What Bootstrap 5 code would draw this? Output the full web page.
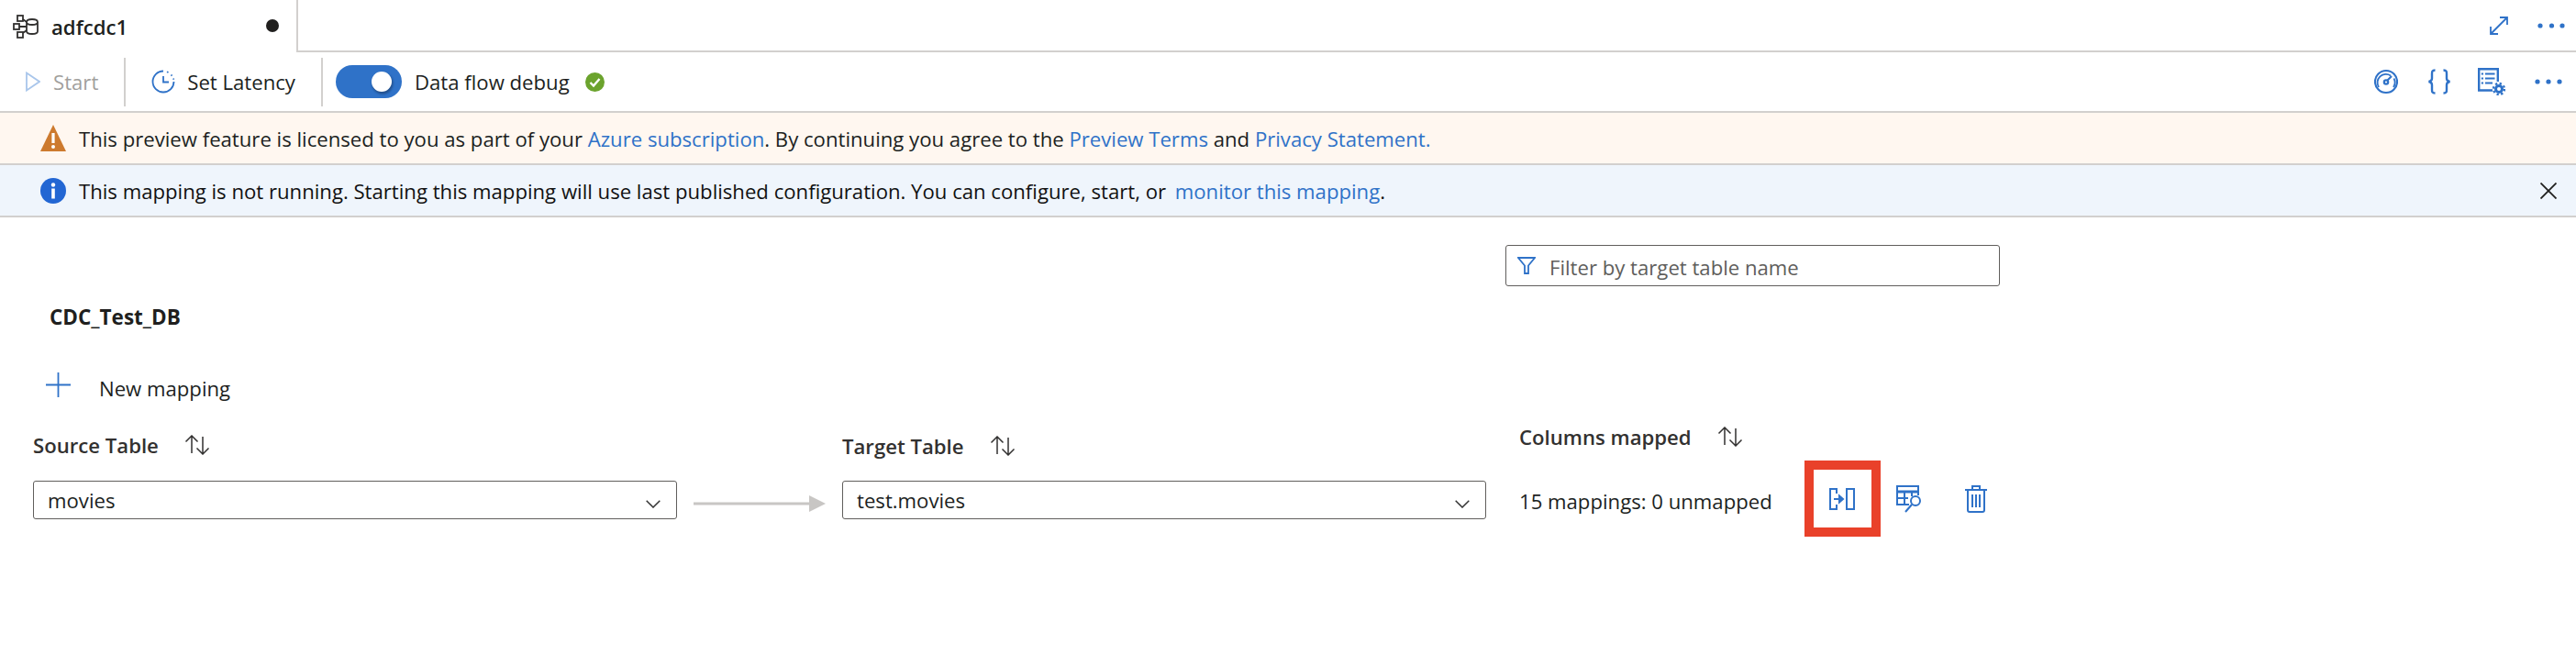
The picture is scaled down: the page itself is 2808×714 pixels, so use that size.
<!doctype html>
<html lang="en"><head><meta charset="utf-8"><title>adfcdc1</title>
<link rel="stylesheet" href="https://cdn.jsdelivr.net/npm/bootstrap@5.3.0/dist/css/bootstrap.min.css">
<style>
html,body{height:100%;}
body{background:#fff;color:#201f1e;font-family:"Open Sans","Noto Sans",sans-serif;font-size:22.15px;line-height:32px;overflow:hidden;}
a{color:#2f72c8;text-decoration:none;}
svg{flex:none;display:block;}
.ink{fill:none;stroke:#2f72c8;}
.ink-dark{fill:none;stroke:#323130;}
.tabbar{height:57px;}
.doc-tab{width:325px;border-right:2px solid #d2d0ce;padding-left:14px;height:57px;}
.doc-name{font-weight:600;margin-left:14px;}
.dirty-dot{width:14px;height:14px;border-radius:50%;background:#201f1e;margin-left:auto;margin-right:19px;margin-bottom:2px;}
.tab-rest{border-bottom:2px solid #d2d0ce;padding-right:12px;}
.expand-ic{margin-right:32px;}
.toolbar-strip{height:66px;border-bottom:2px solid #d2d0ce;padding-left:28px;padding-right:15px;}
.tool-sep{width:2px;height:53px;background:#d2d0ce;margin-left:28px;}
.tool-muted{color:#a19f9d;margin-left:14px;}
.clock-ic{margin-left:28px;}
.tool-text{margin-left:13px;}
.form-check.switch-wrap{margin-left:14px;}
.switch-text{margin-left:14px;}
.ok-ic{margin-left:17px;}
.braces-ic{margin-left:32px;}
.doc-ic{margin-left:29px;}
.more-ic{margin-left:32px;}
.form-switch .form-check-input.flow-switch:checked{width:72px;height:36px;background-color:#2f72c8;border:0;border-radius:18px;background-size:36px 36px;background-position:right 4px center;opacity:1;box-shadow:none;
background-image:url("data:image/svg+xml,%3Csvg xmlns='http://www.w3.org/2000/svg' width='36' height='36'%3E%3Cdefs%3E%3Cfilter id='b'%3E%3CfeGaussianBlur stdDeviation='1.2'/%3E%3C/filter%3E%3C/defs%3E%3Ccircle cx='19' cy='20' r='11.5' fill='%23143560' opacity='.55' filter='url(%23b)'/%3E%3Ccircle cx='18' cy='18' r='11' fill='%23fff'/%3E%3C/svg%3E");}
.notice{height:57px;border-bottom:2px solid #d2d0ce;padding-left:44px;}
.notice-warn{background:#fff7f0;}
.notice-info{background:#eff5fc;color:#111;}
.notice-text{margin-left:14px;}
.close-ic{margin-right:21px;}
.filter-box{width:539px;height:45px;margin-left:1641px;margin-top:30px;border:1px solid #605e5c;border-radius:3px;padding-left:12px;}
.filter-box .form-control{border:0;padding:0;margin-left:15px;margin-top:2px;font-size:22.15px;background:transparent;box-shadow:none;line-height:32px;}
.filter-box .form-control::placeholder{color:#605e5c;opacity:1;}
.db-title{margin-left:54px;margin-top:18px;font-weight:700;font-size:22.5px;}
.new-map{margin-left:50px;margin-top:42px;}
.plus-ic{margin-top:2px;}
.new-text{margin-left:31px;margin-top:3px;}
.map-cols{margin-left:36px;}
.col-label{font-weight:600;color:#323130;}
.sort-ic{margin-left:28px;}
.label-src{margin-top:30px;margin-bottom:23px;}
.label-tgt{margin-top:31px;margin-bottom:22px;}
.label-cols{margin-top:21px;}
.map-select.form-select{height:42px;border:1px solid #605e5c;border-radius:3px;padding:0 0 0 15px;font-size:22.15px;line-height:40px;color:#201f1e;box-shadow:none;
background-image:url("data:image/svg+xml,%3Csvg xmlns='http://www.w3.org/2000/svg' width='16' height='9'%3E%3Cpath d='M.7.7 8 8 15.3.7' fill='none' stroke='%23333' stroke-width='1.5'/%3E%3C/svg%3E");background-size:16px 9px;background-position:right 17px top 20px;}
.flow-col{width:702px;}
.flow-arrow{width:180px;height:18px;padding-left:18px;margin-top:101px;}
.cols-block{margin-left:36px;}
.cols-row{margin-top:10px;}
.cols-text{margin-top:5px;}
.hit-frame{width:83px;height:83px;border:10px solid #e9412a;margin-left:35px;}
.inspect-ic{margin-left:17px;}
.trash-ic{margin-left:47px;}
</style></head>
<body>
<div class="d-flex tabbar">
  <div class="doc-tab d-flex align-items-center">
    <svg width="28" height="26" viewBox="0 0 28 26" class="ink-dark" stroke-width="1.800"><rect x="5" y="1" width="6" height="6"/><rect x="1" y="10" width="6" height="6"/><rect x="5" y="19" width="6" height="6"/><path d="M7 13h8M11 5l4 3M11 20l4-3"/><path d="M15 8c0-4 12-4 12 0v10c0 4-12 4-12 0zM15 8c0 4 12 4 12 0"/></svg>
    <span class="doc-name">adfcdc1</span>
    <span class="dirty-dot"></span>
  </div>
  <div class="tab-rest flex-grow-1 d-flex align-items-center justify-content-end">
    <svg width="20" height="20" viewBox="0 0 20 20" class="ink expand-ic" stroke-width="1.800"><path d="M1 19 19 1M11 1h8v8M1 11v8h8"/></svg>
    <svg width="30" height="6" viewBox="0 0 30 6" fill="#2f72c8"><circle cx="3" cy="3" r="2.600"/><circle cx="15.500" cy="3" r="2.600"/><circle cx="27" cy="3" r="2.600"/></svg>
  </div>
</div>
<div class="toolbar-strip d-flex align-items-center">
  <svg width="16" height="22" viewBox="0 0 16 22" fill="none" stroke="#a9c6eb" stroke-width="1.800"><path d="M1 1.500 15 11 1 20.500z"/></svg>
  <span class="tool-muted">Start</span>
  <span class="tool-sep"></span>
  <svg width="26" height="26" viewBox="0 0 26 26" class="ink clock-ic" stroke-width="1.800"><path d="M13 1.500a11.500 11.500 0 1 0 11.500 11.500"/><path d="M13 7v6.500h6"/><path d="M17 2.200l1.500.8M21.500 5.500l1 1.200M24 9.500l.4 1.200"/></svg>
  <span class="tool-text">Set Latency</span>
  <span class="tool-sep"></span>
  <div class="form-check form-switch switch-wrap p-0 mb-0 d-flex"><input class="form-check-input flow-switch m-0" type="checkbox" checked aria-label="Data flow debug"></div>
  <span class="switch-text">Data flow debug</span>
  <svg class="ok-ic" width="21" height="21" viewBox="0 0 21 21"><circle cx="10.500" cy="10.500" r="10.500" fill="#6ba32d"/><path d="M5.500 11l3.500 3.500 6.500-7.500" fill="none" stroke="#fff" stroke-width="2.400"/></svg>
  <svg class="ink ms-auto" width="26" height="28" viewBox="0 0 26 28" stroke-width="2.200"><circle cx="13" cy="14" r="12"/><path d="M5 20a9.200 9.200 0 0 1 13-12.500M21.500 10.500a9.200 9.200 0 0 1-.5 9.500" stroke-width="1.800"/><circle cx="13" cy="14.500" r="2.200"/><path d="M14.500 12.500l4.500-4.500"/></svg>
  <svg class="ink braces-ic" width="26" height="28" viewBox="0 0 26 28" stroke-width="2.400"><path d="M8.500 1.500c-3.500 0-3.500 1.500-3.500 4v5c0 2-1 3-3.500 3.500 2.500.5 3.500 1.500 3.500 3.500v5c0 2.500 0 4 3.500 4M17.500 1.500c3.500 0 3.500 1.500 3.500 4v5c0 2 1 3 3.500 3.500-2.500.5-3.500 1.500-3.500 3.500v5c0 2.500 0 4-3.500 4"/></svg>
  <svg class="ink doc-ic" width="30" height="30" viewBox="0 0 30 30" stroke-width="2.400"><path d="M16 24.500H1.200V1.200h20.600V15"/><path d="M8 6.500h10.500M8 11.500h10.500M8 16.500h8M3.800 6.500h2.200M3.800 11.500h2.200M3.800 16.500h2.200" stroke-width="2.200"/><circle cx="23" cy="23" r="3.500" stroke-width="3"/><circle cx="23" cy="23" r="6" stroke-width="2.400" stroke-dasharray="2.300 2.400"/></svg>
  <svg class="more-ic" width="30" height="6" viewBox="0 0 30 6" fill="#2f72c8"><circle cx="3" cy="3" r="2.600"/><circle cx="15" cy="3" r="2.600"/><circle cx="27" cy="3" r="2.600"/></svg>
</div>
<div class="notice notice-warn d-flex align-items-center">
  <svg width="28" height="29" viewBox="0 0 28 29"><path d="M14 0 28 29H0z" fill="#cd7a2e"/><rect x="12.400" y="9" width="3.200" height="11" fill="#fff"/><circle cx="14" cy="24" r="2" fill="#fff"/></svg>
  <span class="notice-text">This preview feature is licensed to you as part of your <a href="#">Azure subscription</a>. By continuing you agree to the <a href="#">Preview Terms</a> and <a href="#">Privacy Statement.</a></span>
</div>
<div class="notice notice-info d-flex align-items-center">
  <svg width="28" height="28" viewBox="0 0 28 28"><circle cx="14" cy="14" r="14" fill="#2266d3"/><circle cx="14" cy="7.500" r="2.200" fill="#fff"/><rect x="12.200" y="11.500" width="3.600" height="11" fill="#fff"/></svg>
  <span class="notice-text">This mapping is not running. Starting this mapping will use last published configuration. You can configure, start, or <a href="#" class="ms-1">monitor this mapping</a>.</span>
  <svg class="ms-auto close-ic" width="18" height="18" viewBox="0 0 18 18" fill="none" stroke="#201f1e" stroke-width="1.800"><path d="M.5.500l17 17M17.500.500l-17 17"/></svg>
</div>
<main>
  <div class="filter-box d-flex align-items-center">
    <svg width="20" height="19" viewBox="0 0 20 19" class="ink" stroke-width="1.800"><path d="M1 1h18l-7 8.500V18H8V9.500z"/></svg>
    <input class="form-control" type="text" placeholder="Filter by target table name">
  </div>
  <div class="db-title">CDC_Test_DB</div>
  <div class="new-map d-flex align-items-start">
    <svg class="ink plus-ic" width="27" height="27" viewBox="0 0 27 27" stroke-width="1.800"><path d="M13.500 0v27M0 13.500h27"/></svg>
    <span class="new-text">New mapping</span>
  </div>
  <div class="map-cols d-flex align-items-start">
    <div class="flow-col">
      <div class="d-flex align-items-center col-label label-src">Source Table
        <svg class="sort-ic" width="28" height="22" viewBox="0 0 28 22" fill="none" stroke="#323130" stroke-width="1.500"><path d="M8 20V1M1.500 7.500 8 1l6.500 6.500M20 2v19M13.500 14.500 20 21l6.500-6.500"/></svg></div>
      <select class="form-select map-select" aria-label="Source Table"><option>movies</option></select>
    </div>
    <div class="flow-arrow">
      <svg width="144" height="18" viewBox="0 0 144 18"><rect y="7.500" width="128" height="3" fill="#c8c6c4"/><path d="M126 0l18 9-18 9z" fill="#c8c6c4"/></svg>
    </div>
    <div class="flow-col">
      <div class="d-flex align-items-center col-label label-tgt">Target Table
        <svg class="sort-ic" width="28" height="22" viewBox="0 0 28 22" fill="none" stroke="#323130" stroke-width="1.500"><path d="M8 20V1M1.500 7.500 8 1l6.500 6.500M20 2v19M13.500 14.500 20 21l6.500-6.500"/></svg></div>
      <select class="form-select map-select" aria-label="Target Table"><option>test.movies</option></select>
    </div>
    <div class="cols-block">
      <div class="d-flex align-items-center col-label label-cols">Columns mapped
        <svg class="sort-ic" width="28" height="22" viewBox="0 0 28 22" fill="none" stroke="#323130" stroke-width="1.500"><path d="M8 20V1M1.500 7.500 8 1l6.500 6.500M20 2v19M13.500 14.500 20 21l6.500-6.500"/></svg></div>
      <div class="d-flex align-items-center cols-row">
        <span class="cols-text">15 mappings: 0 unmapped</span>
        <span class="hit-frame d-flex align-items-center justify-content-center">
          <svg width="28" height="24" viewBox="0 0 28 24" class="ink" stroke-width="2"><path d="M8 6V1H1v22h7v-5"/><rect x="19" y="1" width="8" height="22"/><path d="M5 12h8"/><path d="M11 8.500l4 3.500-4 3.500z" fill="#2f72c8"/></svg>
        </span>
        <svg class="ink inspect-ic" width="28" height="30" viewBox="0 0 28 30" stroke-width="2"><path d="M14 21H1V1h23v10"/><path d="M1 7h23" stroke-width="3"/><path d="M1 14h12M9 7v14M17 7v5"/><circle cx="21" cy="17" r="5"/><path d="M17 21l-7 8"/></svg>
        <svg class="ink trash-ic" width="24" height="30" viewBox="0 0 24 30" stroke-width="2"><path d="M0 5h24M8 5V1h8v4M3 5v22q0 2 2 2h14q2 0 2-2V5M8 10v14M12 10v14M16 10v14"/></svg>
      </div>
    </div>
  </div>
</main>
<script src="https://cdn.jsdelivr.net/npm/bootstrap@5.3.0/dist/js/bootstrap.bundle.min.js"></script>
</body></html>
